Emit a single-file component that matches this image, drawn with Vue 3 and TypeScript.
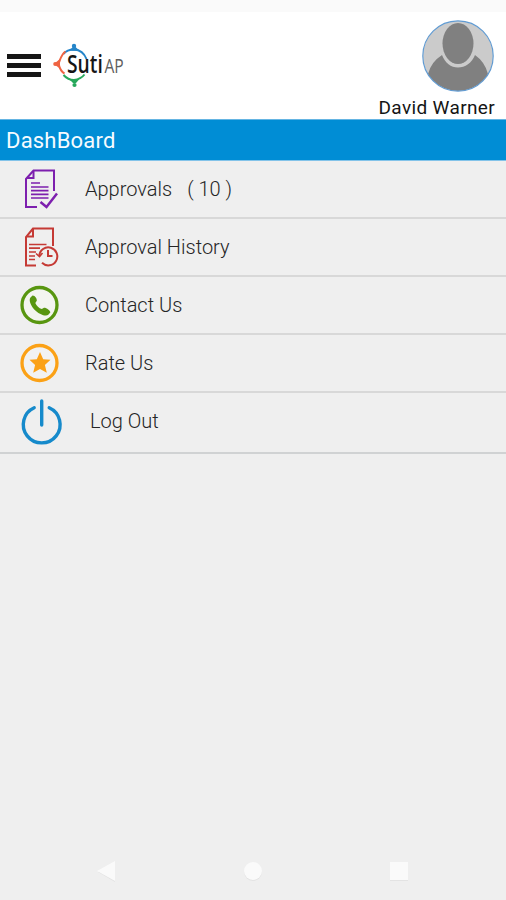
<script setup lang="ts">
type IconName = 'approvals' | 'history' | 'contact' | 'rate' | 'logout'

interface MenuItem {
  icon: IconName
  label: string
  count?: number
}

const userName = 'David Warner'

const items: MenuItem[] = [
  { icon: 'approvals', label: 'Approvals', count: 10 },
  { icon: 'history', label: 'Approval History' },
  { icon: 'contact', label: 'Contact Us' },
  { icon: 'rate', label: 'Rate Us' },
  { icon: 'logout', label: 'Log Out' },
]
</script>

<template>
  <div class="screen">
    <div class="status-bar"></div>
    <header class="header">
      <div class="brand">
        <button class="menu-button" aria-label="Menu">
          <span></span><span></span><span></span>
        </button>
        <svg class="logo" width="84" height="48" viewBox="0 0 84 48">
          <g fill="none" stroke-width="2">
            <path d="M11.500 12Q15 7.500 22 7.500Q31 8 34.500 17" stroke="#2585c9" />
            <path d="M13.500 9.500C9.500 12 8.500 17 6.500 21.500C8 28 9.500 30 12.500 31.500" stroke="#ef6442" />
            <path d="M11.500 33Q16 38 22 38Q29 37 32.500 32.500" stroke="#27a85b" />
          </g>
          <path d="M17 8.500L21 5H23.500L28 9Z" fill="#2585c9" />
          <circle cx="22" cy="4" r="2.200" fill="#2585c9" />
          <path d="M8 17L3 21V23L8 26.500Z" fill="#ef6442" />
          <circle cx="3.200" cy="22" r="2" fill="#ef6442" />
          <path d="M17 37L21 41H24L27.500 37Z" fill="#27a85b" />
          <circle cx="22.500" cy="43" r="2.100" fill="#27a85b" />
          <text class="logo-main" transform="translate(15 31) scale(0.74 1)">Suti</text>
          <text class="logo-sub" transform="translate(52.500 31) scale(0.8 1)">AP</text>
        </svg>
      </div>
      <div class="profile">
        <svg class="avatar" width="72" height="72" viewBox="0 0 72 72">
          <defs>
            <clipPath id="avatar-clip"><circle cx="36" cy="36" r="35" /></clipPath>
          </defs>
          <circle cx="36" cy="36" r="35" fill="#cbcbcb" />
          <g clip-path="url(#avatar-clip)" fill="#808080">
            <path d="M6 54Q9 42 20 35C23 43 29 47.500 36 47.500S50 43 53 35Q63 42 66 54V72H6Z" />
            <ellipse cx="36" cy="23.500" rx="15.500" ry="20.500" />
          </g>
          <circle cx="36" cy="36" r="35.200" fill="none" stroke="#619bd2" stroke-width="1.200" />
        </svg>
        <div class="user-name">{{ userName }}</div>
      </div>
    </header>

    <h1 class="title">DashBoard</h1>

    <nav class="menu">
      <a v-for="item in items" :key="item.icon" class="item" :class="item.icon">
        <svg class="icon" width="46" height="48" viewBox="0 0 46 48">
          <g v-if="item.icon === 'approvals'" fill="none" stroke="#7d1fae" stroke-width="2">
            <path d="M19 42H8V14L15.500 5.500H36V26" />
            <path d="M9 13H15.500V6" />
            <path d="M13 18H22M13 22H30.500M13 25.700H30.500M13 29.400H30.500M13 33H30.500" stroke-width="1.700" />
            <path d="M22.500 37L28.500 42L39 28.500" stroke-width="2.500" />
          </g>
          <g v-else-if="item.icon === 'history'" fill="none" stroke="#c53a35" stroke-width="2">
            <path d="M18 42.500H8V14L15 5.500H35V23" />
            <path d="M9 13.500H15V6" />
            <path d="M11 21.500H28.500M11 25.200H22M11 29H18M11 33H17M11 36.500H17" stroke-width="1.700" />
            <path d="M21.300 33A9 9 0 1 1 24 39.800" />
            <path d="M18 30.500L21.500 33.500L24.500 30" stroke-width="1.600" />
            <path d="M30 27V33H34.500" />
          </g>
          <g v-else-if="item.icon === 'contact'">
            <circle cx="21.500" cy="24" r="17.500" fill="#f3f5ef" stroke="#589610" stroke-width="3.300" />
            <path
              fill="#589610"
              d="M12.500 16.500L14.500 14.500C17 14.300 19.200 18 18.800 19.800L17.300 22C18.500 25 21 27.200 23.800 28L26 26.700C28.500 26.600 32.500 29.400 32.300 31.500L30.300 33.800C28 36 20.500 33.200 16 28.200C11.500 22.500 11 18.500 12.500 16.500Z"
            />
          </g>
          <g v-else-if="item.icon === 'rate'">
            <circle cx="21.500" cy="24" r="17.500" fill="#f2f2f2" stroke="#fba116" stroke-width="3.300" />
            <path
              fill="#fba116"
              d="M22 13L25.200 20.300L32.500 20.700L26.900 25.900L28.800 33.800L22 29.900L15.200 33.800L17.100 25.900L11.500 20.700L18.800 20.300Z"
            />
          </g>
          <g v-else fill="none" stroke="#168acb" stroke-width="3.400" stroke-linecap="round">
            <path d="M16.200 8.700A18.400 18.400 0 1 0 31.200 8.700" />
            <path d="M23.700 2V26" />
          </g>
        </svg>
        <span class="label">{{ item.label }}</span>
        <span v-if="item.count !== undefined" class="count">( {{ item.count }} )</span>
      </a>
    </nav>

    <footer class="nav-bar">
      <svg class="nav-icon" width="22" height="24" viewBox="0 0 22 24">
        <path d="M2 13L19 23V21L4 12Z" fill="#e2e2e2" />
        <path d="M1 12L19 2V22Z" fill="#fafafa" />
      </svg>
      <svg class="nav-icon" width="22" height="24" viewBox="0 0 22 24">
        <circle cx="11" cy="13" r="9" fill="#e3e3e3" />
        <circle cx="11" cy="12" r="9" fill="#fafafa" />
      </svg>
      <svg class="nav-icon" width="22" height="24" viewBox="0 0 22 24">
        <path d="M2 4H20V22H2Z" fill="#e3e3e3" />
        <path d="M2 3H20V21H2Z" fill="#fafafa" />
      </svg>
    </footer>
  </div>
</template>

<style>
body {
  margin: 0;
}
</style>

<style scoped>
.screen {
  display: flex;
  flex-direction: column;
  width: 506px;
  height: 900px;
  overflow: hidden;
  background: #efefef;
  font-family: Roboto, "Liberation Sans", sans-serif;
}

.status-bar {
  height: 12px;
  background: #fafafa;
}

.header {
  display: flex;
  justify-content: space-between;
  height: 107px;
  background: #fff;
}

.brand {
  display: flex;
  align-items: flex-start;
  gap: 11px;
  padding: 30px 0 0 7px;
}

.menu-button {
  display: flex;
  flex-direction: column;
  gap: 4px;
  margin: 12px 0 0;
  padding: 0;
  border: 0;
  background: none;
}

.menu-button span {
  width: 34px;
  height: 5px;
  background: #151515;
}

.logo-main {
  font-family: "Open Sans", sans-serif;
  font-size: 26px;
  font-weight: 600;
  fill: #151515;
}

.logo-sub {
  font-family: "Open Sans", sans-serif;
  font-size: 19.5px;
  font-weight: 500;
  fill: #606060;
}

.profile {
  display: flex;
  flex-direction: column;
  align-items: flex-end;
  padding: 8px 11px 0 0;
}

.avatar {
  flex: none;
  margin-right: 1px;
}

.user-name {
  margin-top: 5px;
  color: #151515;
  font-size: 19px;
  line-height: 22px;
  letter-spacing: 0.35px;
  white-space: nowrap;
}

.title {
  box-sizing: border-box;
  height: 42px;
  margin: 0;
  padding: 1px 6px 0;
  border-top: 1px solid #65b5e3;
  border-bottom: 1px solid #83c3e9;
  background: #008dd5;
  color: #f5fbff;
  font-size: 22px;
  font-weight: 400;
  line-height: 40px;
  letter-spacing: 0.2px;
}

.menu {
  display: flex;
  flex-direction: column;
}

.item {
  display: flex;
  align-items: center;
  box-sizing: border-box;
  height: 58px;
  padding-left: 18px;
  border-bottom: 2px solid #d8d8d8;
  color: #252525;
  font-size: 20px;
  font-weight: 300;
  letter-spacing: 0;
  white-space: pre;
}

.item.logout {
  height: 61px;
  border-color: #d0d2d3;
}

.icon {
  flex: none;
  margin-right: 21px;
}

.logout .icon {
  margin-right: 26px;
}

.logout .label {
  padding-bottom: 3px;
}

.count {
  margin-left: 15px;
}

.nav-bar {
  display: flex;
  justify-content: space-between;
  margin-top: auto;
  padding: 0 96px 17px;
}
</style>
